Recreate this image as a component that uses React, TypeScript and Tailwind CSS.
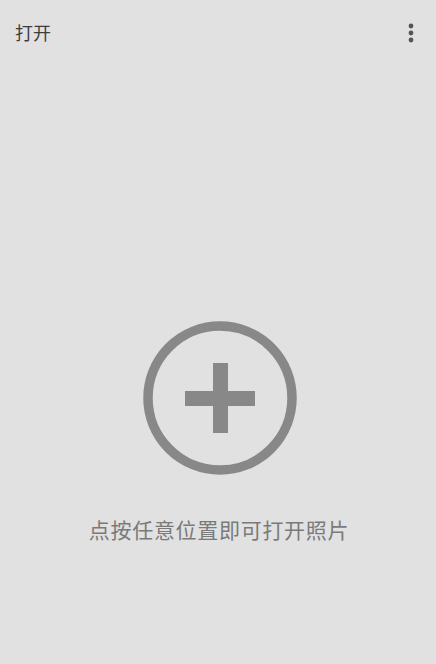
import React from "react";

export default function App() {
  const font = { fontFamily: '"Noto Sans CJK SC", "Noto Sans", sans-serif' };
  return (
    <div className="w-[436px] h-[664px] bg-[#e1e1e1] flex flex-col overflow-hidden" style={font}>
      <div className="h-16 flex items-center justify-between pl-[15px] pr-[21px]">
        <span className="text-[18px] text-[#3d3d3d] leading-none -mt-[1px]">打开</span>
        <svg width="8" height="20" viewBox="0 0 8 20" className="mt-[1px]">
          <circle cx="4" cy="3" r="2.4" fill="#555" />
          <circle cx="4" cy="10" r="2.4" fill="#555" />
          <circle cx="4" cy="17" r="2.4" fill="#555" />
        </svg>
      </div>
      <div className="flex flex-col items-center mt-[256px]">
        <svg width="156" height="156" viewBox="0 0 156 156" className="ml-[4px]">
          <circle cx="78" cy="78" r="72" fill="none" stroke="#888888" strokeWidth="9.5" />
          <rect x="43" y="71" width="70" height="15" fill="#888888" />
          <rect x="71" y="43" width="15" height="70" fill="#888888" />
        </svg>
        <div className="mt-[43px] text-[21px] leading-none text-[#7a7a7a] tracking-[0.7px] ml-[2px]">点按任意位置即可打开照片</div>
      </div>
    </div>
  );
}
